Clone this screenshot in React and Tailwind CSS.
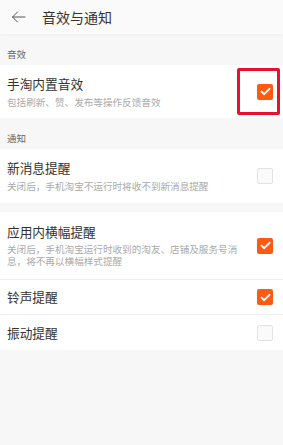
import React, { useState } from 'react';

const Check = ({ checked, onClick }) => (
  <button
    onClick={onClick}
    className={
      'w-[16px] h-[16px] rounded-[2px] flex items-center justify-center shrink-0 ' +
      (checked ? 'bg-[#ff5a12]' : 'bg-[#fafafa] border border-[#e3e3e3]')
    }
  >
    {checked && (
      <svg width="11" height="9" viewBox="0 0 11 9" fill="none">
        <path d="M1.5 4.6 L4.2 7.2 L9.5 1.8" stroke="#fff" strokeWidth="1.9" strokeLinecap="round" strokeLinejoin="round" />
      </svg>
    )}
  </button>
);

const SectionLabel = ({ children }) => (
  <div className="h-[31px] flex items-end pb-[5px] pl-[7px] text-[9.5px] leading-[12px] text-[#666]">
    {children}
  </div>
);

export default function App() {
  const [state, setState] = useState({
    builtin: true,
    newMsg: false,
    banner: true,
    ring: true,
    vibrate: false,
  });
  const toggle = (k) => setState((s) => ({ ...s, [k]: !s[k] }));

  return (
    <div
      className="min-h-screen w-full bg-[#f7f7f7] text-[#333]"
      style={{ fontFamily: '"Noto Sans CJK SC", "Noto Sans", sans-serif' }}
    >
      {/* Header */}
      <header className="h-[34px] bg-[#fafafa] flex items-center shadow-[0_1px_3px_rgba(0,0,0,0.04)]">
        <svg className="ml-[11px]" width="15" height="12" viewBox="0 0 15 12" fill="none">
          <path d="M14 6 H1.5 M6.5 1 L1.5 6 L6.5 11" stroke="#555" strokeWidth="1" strokeLinecap="round" strokeLinejoin="round" />
        </svg>
        <h1 className="ml-[16px] text-[14px] leading-[18px] text-[#333]">音效与通知</h1>
      </header>

      <SectionLabel>音效</SectionLabel>
      <div className="relative h-[53px] bg-white flex items-center pl-[7px] pr-[10px]">
        <div className="flex-1 flex flex-col gap-[4px]">
          <div className="text-[12.7px] leading-[16px] text-[#333]">手淘内置音效</div>
          <div className="text-[9.6px] leading-[12px] text-[#aaa]">包括刷新、赞、发布等操作反馈音效</div>
        </div>
        <Check checked={state.builtin} onClick={() => toggle('builtin')} />
        <div className="absolute left-[237px] top-[3px] w-[43px] h-[47px] border-[3px] border-[#e8102a] rounded-[2px] pointer-events-none" />
      </div>

      <SectionLabel>通知</SectionLabel>
      <div className="h-[54px] bg-white flex items-center pl-[7px] pr-[10px]">
        <div className="flex-1 flex flex-col gap-[4px]">
          <div className="text-[12.7px] leading-[16px] text-[#333]">新消息提醒</div>
          <div className="text-[9.6px] leading-[12px] text-[#aaa]">关闭后，手机淘宝不运行时将收不到新消息提醒</div>
        </div>
        <Check checked={state.newMsg} onClick={() => toggle('newMsg')} />
      </div>

      <div className="mt-[9px] bg-white">
        <div className="h-[68px] flex items-center pl-[7px] pr-[10px] border-b border-[#f0f0f0]">
          <div className="flex-1 flex flex-col">
            <div className="text-[12.7px] leading-[16px] text-[#333] mb-[3px]">应用内横幅提醒</div>
            <div className="text-[9.6px] leading-[12px] text-[#aaa]">关闭后，手机淘宝运行时收到的淘友、店铺及服务号消</div>
            <div className="text-[9.6px] leading-[12px] text-[#aaa]">息，将不再以横幅样式提醒</div>
          </div>
          <Check checked={state.banner} onClick={() => toggle('banner')} />
        </div>
        <div className="h-[35px] flex items-center pl-[7px] pr-[10px] border-b border-[#f0f0f0]">
          <div className="flex-1 text-[12.7px] leading-[16px] text-[#333]">铃声提醒</div>
          <Check checked={state.ring} onClick={() => toggle('ring')} />
        </div>
        <div className="h-[35px] flex items-center pl-[7px] pr-[10px]">
          <div className="flex-1 text-[12.7px] leading-[16px] text-[#333]">振动提醒</div>
          <Check checked={state.vibrate} onClick={() => toggle('vibrate')} />
        </div>
      </div>
    </div>
  );
}
